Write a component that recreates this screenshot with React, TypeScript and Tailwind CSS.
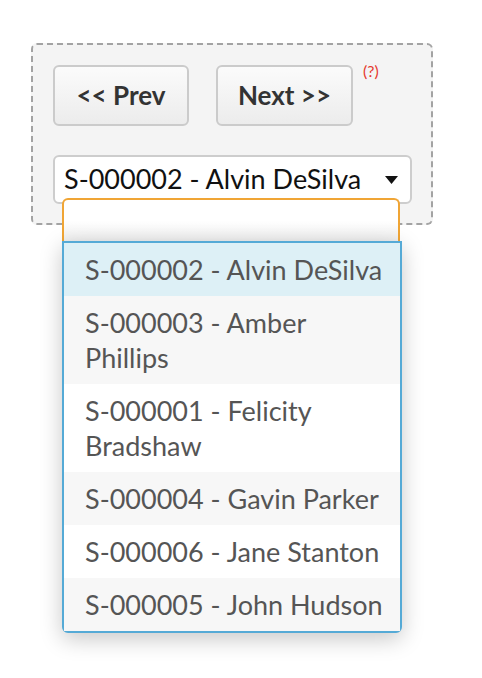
import { useState } from "react";

const options = [
    { id: "S-000002", name: "Alvin DeSilva" },
    { id: "S-000003", name: "Amber Phillips" },
    { id: "S-000001", name: "Felicity Bradshaw" },
    { id: "S-000004", name: "Gavin Parker" },
    { id: "S-000006", name: "Jane Stanton" },
    { id: "S-000005", name: "John Hudson" },
];

export default function App() {
    const [selected] = useState(0);

    return (
        <div className="min-h-screen bg-white font-['Lato',sans-serif] pl-[31px] pt-[43px]">
            <div className="relative w-[402px] rounded-md border-2 border-dashed border-[#a3a3a3] bg-[#f4f4f4] px-[20px] pt-[20px] pb-[19px]">
                {/* nav buttons */}
                <div className="flex items-start gap-[27px]">
                    <button className="h-[61px] w-[136px] rounded-md border-2 border-[#cbcbcb] bg-gradient-to-b from-[#fbfbfb] to-[#ececec] text-[26px] font-bold text-[#333]">
                        &lt;&lt; Prev
                    </button>
                    <button className="h-[61px] w-[137px] rounded-md border-2 border-[#cbcbcb] bg-gradient-to-b from-[#fbfbfb] to-[#ececec] text-[26px] font-bold text-[#333]">
                        Next &gt;&gt;
                    </button>
                    <span className="-ml-[17px] -mt-[6px] text-[16px] text-[#e53a2f]">(?)</span>
                </div>

                {/* select */}
                <div className="mt-[29px] flex h-[49px] w-[359px] items-center justify-between rounded-md border-2 border-[#cdcdcd] bg-white pl-[9px] pr-[12px]">
                    <span className="text-[27px] text-[#111]">
                        {options[selected].id} - {options[selected].name}
                    </span>
                    <svg width="13" height="8" viewBox="0 0 13 8">
                        <path d="M0 0h13L6.5 8z" fill="#111" />
                    </svg>
                </div>

                {/* open dropdown */}
                <div className="absolute left-[29px] top-[153px] z-10 w-[340px]">
                    <div className="h-[43px] w-[338px] rounded-t-md border-2 border-b-0 border-[#f0a535] bg-gradient-to-b from-white from-50% to-[#efefef]" />
                    <ul className="rounded-b-md border-2 border-[#55aad6] bg-white shadow-[0_6px_22px_rgba(0,0,0,0.22)]">
                        {options.map((o, i) => (
                            <li
                                key={o.id}
                                className={`py-[9px] pl-[21px] pr-[10px] text-[27px] leading-[35px] text-[#555] ${
                                    i === selected ? "bg-[#ddf0f6]" : i % 2 === 1 ? "bg-[#f7f7f7]" : "bg-white"
                                }`}
                            >
                                {o.id} - {o.name}
                            </li>
                        ))}
                    </ul>
                </div>
            </div>
        </div>
    );
}
